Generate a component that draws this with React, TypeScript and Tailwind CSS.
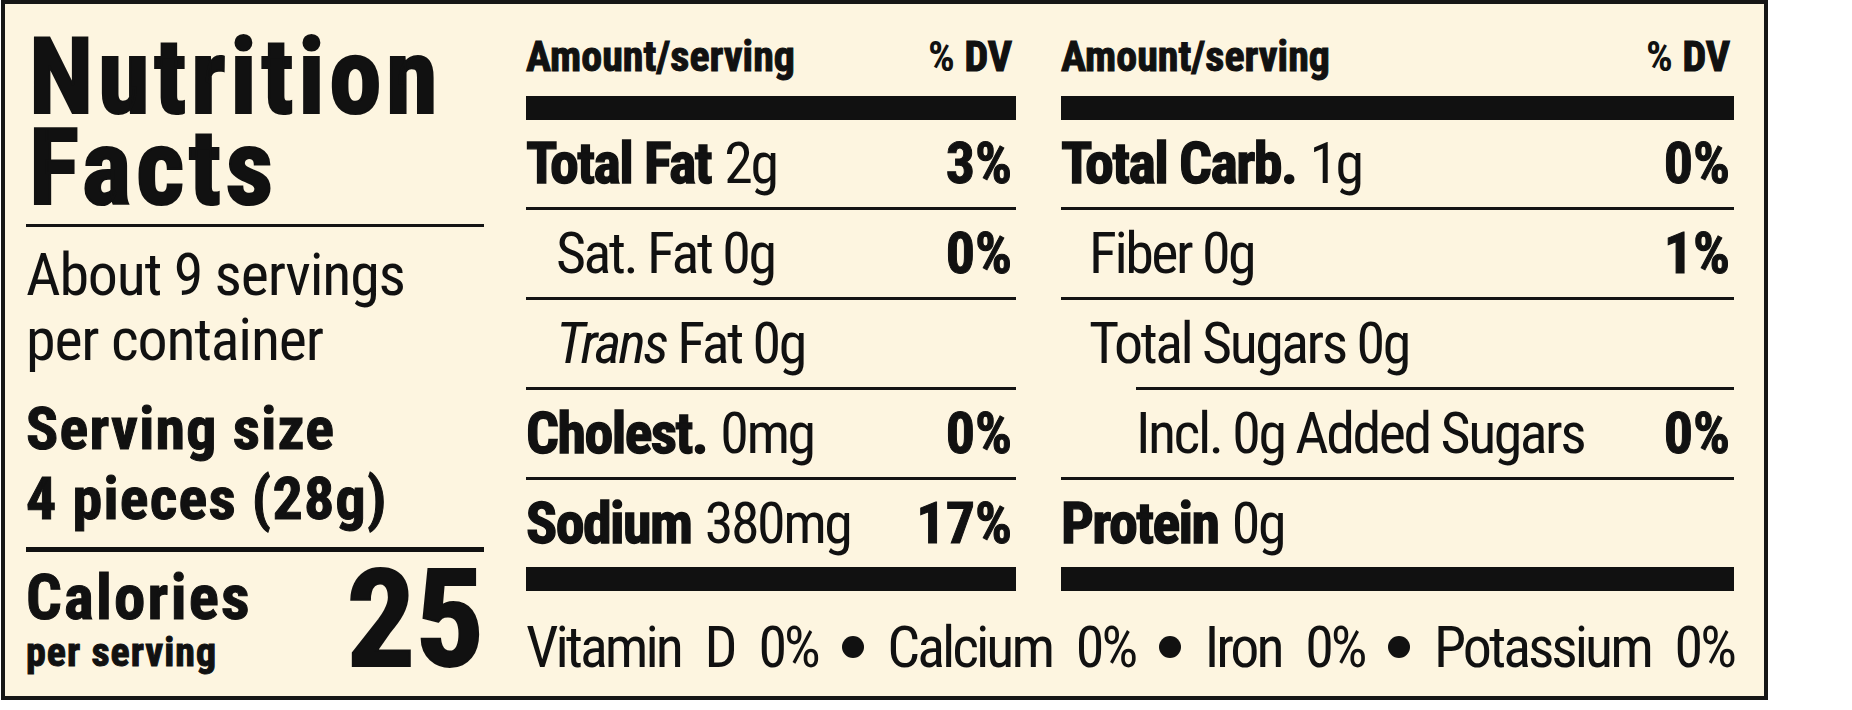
import React from "react";

const F = "font-['Roboto_Condensed','DejaVu_Sans_Condensed',sans-serif]";
const B = "font-bold [-webkit-text-stroke:1px_#111]";
const L = "font-bold tracking-[-1.6px] [-webkit-text-stroke:1.3px_#111]";

function Row({
  children,
  dv,
  indent = "",
}: {
  children: React.ReactNode;
  dv?: string;
  indent?: string;
}) {
  return (
    <div className={`flex justify-between h-[87px] leading-[87px] text-[58px] whitespace-nowrap ${indent}`}>
      <div>{children}</div>
      {dv ? <div className={`${B} pr-[4px]`}>{dv}</div> : null}
    </div>
  );
}

function Reg({ children }: { children: React.ReactNode }) {
  return <span className="tracking-[-2.5px]">{children}</span>;
}

function Sep({ className = "" }: { className?: string }) {
  return <div className={`h-[3px] bg-[#141414] ${className}`} />;
}

function Bar() {
  return <div className="h-[24px] bg-[#111]" />;
}

function Header() {
  return (
    <div className="h-[92px] pt-[32px] flex justify-between text-[42px] leading-[42px] font-bold whitespace-nowrap">
      <div className="[-webkit-text-stroke:1px_#111]">Amount/serving</div>
      <div className="pr-[4px]">
        % <span className="[-webkit-text-stroke:1.2px_#111]">DV</span>
      </div>
    </div>
  );
}

function Dot() {
  return <div className="w-[22px] h-[22px] rounded-full bg-[#111] self-center" />;
}

export default function App() {
  return (
    <div className={`w-[1852px] h-[710px] bg-white text-[#111] ${F}`}>
      <div className="ml-[1px] w-[1767px] h-[700px] border-4 border-[#161616] bg-[#fdf5e0] flex pl-[21px] pr-[30px]">
        {/* Left column */}
        <div className="w-[458px] pt-[28px] flex flex-col">
          <div className="pl-[3px] text-[105px] leading-[91px] font-bold tracking-[4.6px] [-webkit-text-stroke:2.2px_#111] whitespace-nowrap">
            <div>Nutrition</div>
            <div>Facts</div>
          </div>
          <div className="mt-[10px] h-[3px] bg-[#141414]" />
          <div className="mt-[15px] text-[60px] leading-[65px] tracking-[-1.2px] whitespace-nowrap">
            <div>About 9 servings</div>
            <div>per container</div>
          </div>
          <div className={`mt-[22px] text-[60px] leading-[70px] ${B} tracking-[1.2px] whitespace-nowrap`}>
            <div>Serving size</div>
            <div>4 pieces (28g)</div>
          </div>
          <div className="mt-[13px] h-[5px] bg-[#111]" />
          <div className="flex justify-between items-start">
            <div className={`pt-[15px] ${B} whitespace-nowrap`}>
              <div className="text-[63px] leading-[62px] tracking-[2.2px]">Calories</div>
              <div className="mt-[4px] text-[40px] leading-[40px] tracking-[1px]">per serving</div>
            </div>
            <div className="text-[136px] leading-[136px] font-bold [-webkit-text-stroke:2px_#111]">25</div>
          </div>
        </div>

        {/* Right area */}
        <div className="flex-1 ml-[42px] flex flex-col">
          <div className="flex gap-[45px]">
            <div className="w-[490px] flex flex-col">
              <Header />
              <Bar />
              <Row dv="3%">
                <span className={L}>Total Fat</span> <Reg>2g</Reg>
              </Row>
              <Sep />
              <Row dv="0%" indent="pl-[30px]">
                <Reg>Sat. Fat 0g</Reg>
              </Row>
              <Sep />
              <Row indent="pl-[30px]">
                <Reg>
                  <span className="italic">Trans</span> Fat 0g
                </Reg>
              </Row>
              <Sep />
              <Row dv="0%">
                <span className={L}>Cholest.</span> <Reg>0mg</Reg>
              </Row>
              <Sep />
              <Row dv="17%">
                <span className={L}>Sodium</span> <Reg>380mg</Reg>
              </Row>
              <Bar />
            </div>
            <div className="flex-1 flex flex-col">
              <Header />
              <Bar />
              <Row dv="0%">
                <span className={L}>Total Carb.</span> <Reg>1g</Reg>
              </Row>
              <Sep />
              <Row dv="1%" indent="pl-[28px]">
                <Reg>Fiber 0g</Reg>
              </Row>
              <Sep />
              <Row indent="pl-[28px]">
                <Reg>Total Sugars 0g</Reg>
              </Row>
              <Sep className="ml-[75px]" />
              <Row dv="0%" indent="pl-[75px]">
                <Reg>Incl. 0g Added Sugars</Reg>
              </Row>
              <Sep />
              <Row>
                <span className={L}>Protein</span> <Reg>0g</Reg>
              </Row>
              <Bar />
            </div>
          </div>
          <div className="mt-[27px] flex justify-between text-[58px] leading-[58px] tracking-[-3px] whitespace-nowrap">
            <span>Vitamin</span>
            <span>D</span>
            <span>0%</span>
            <Dot />
            <span>Calcium</span>
            <span>0%</span>
            <Dot />
            <span>Iron</span>
            <span>0%</span>
            <Dot />
            <span>Potassium</span>
            <span>0%</span>
          </div>
        </div>
      </div>
    </div>
  );
}
